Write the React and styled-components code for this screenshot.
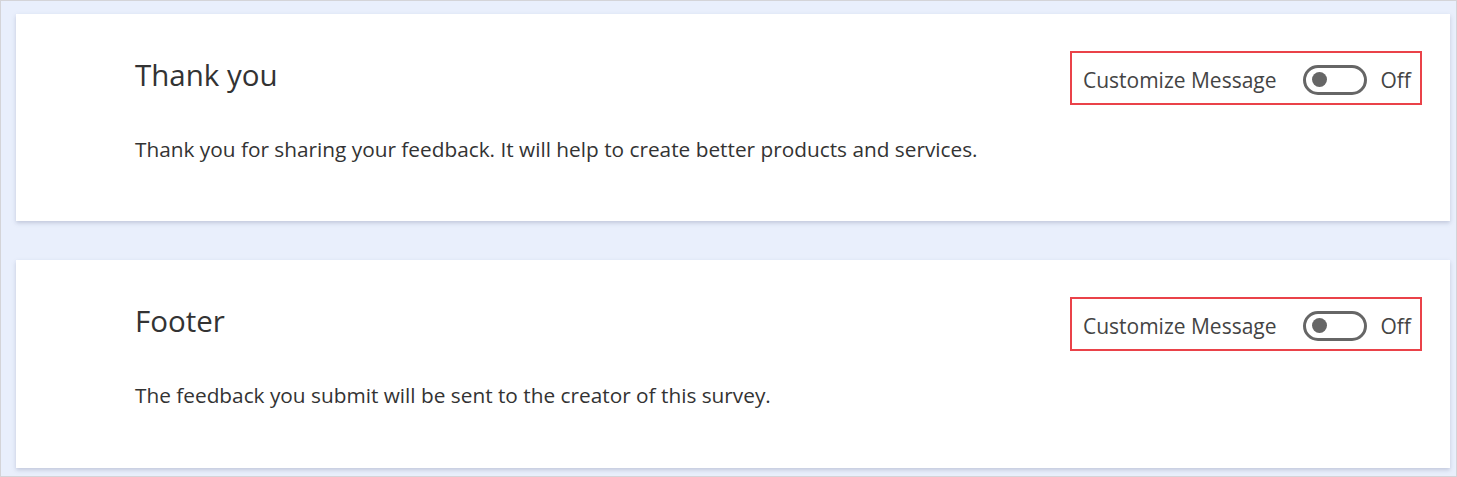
import React from "react";
import styled, { createGlobalStyle } from "styled-components";

const Global = createGlobalStyle`
  html, body { margin: 0; padding: 0; background: #fff; }
  body { font-family: "Open Sans", "Noto Sans", sans-serif; }
`;

const Frame = styled.div`
  box-sizing: border-box;
  width: 1457px;
  height: 477px;
  border: 1px solid #d4d4d8;
  background: #e9effc;
  padding: 13px 6px 0 15px;
  display: flex;
  flex-direction: column;
  gap: 39px;
  overflow: hidden;
`;

const Card = styled.section`
  box-sizing: border-box;
  background: #fff;
  height: ${(p) => p.$h}px;
  flex-shrink: 0;
  padding: 0 28px 0 119px;
  display: grid;
  grid-template-columns: 1fr auto;
  grid-template-rows: 122px auto;
  box-shadow: 0 2px 4px rgba(120, 130, 160, 0.35);
`;

const Title = styled.h2`
  margin: 0;
  align-self: start;
  margin-top: 43px;
  font-size: 29.5px;
  font-weight: 400;
  color: #333;
  line-height: 36px;
`;

const Body = styled.p`
  grid-column: 1 / -1;
  margin: 0;
  font-size: 20.8px;
  color: #333;
  line-height: 26px;
`;

const Box = styled.div`
  align-self: start;
  margin-top: 37px;
  box-sizing: border-box;
  height: 54px;
  border: 2px solid #ea4249;
  display: flex;
  align-items: center;
  padding: 3px 9px 0 11px;
`;

const Label = styled.span`
  font-size: 21px;
  color: #444;
  margin-right: 26px;
`;

const Switch = styled.span`
  box-sizing: border-box;
  width: 64px;
  height: 30px;
  border: 3px solid #666;
  border-radius: 15px;
  display: flex;
  align-items: center;
  padding-left: 6px;
  margin-right: 14px;
`;

const Knob = styled.span`
  width: 15px;
  height: 15px;
  border-radius: 50%;
  background: #666;
`;

const State = styled.span`
  font-size: 21px;
  color: #444;
`;

const Section = ({ title, text, h }) => (
  <Card $h={h}>
    <Title>{title}</Title>
    <Box>
      <Label>Customize Message</Label>
      <Switch role="switch" aria-checked="false">
        <Knob />
      </Switch>
      <State>Off</State>
    </Box>
    <Body>{text}</Body>
  </Card>
);

export default function App() {
  return (
    <>
      <Global />
      <Frame>
        <Section
          h={207}
          title="Thank you"
          text="Thank you for sharing your feedback. It will help to create better products and services."
        />
        <Section
          h={208}
          title="Footer"
          text="The feedback you submit will be sent to the creator of this survey."
        />
      </Frame>
    </>
  );
}
